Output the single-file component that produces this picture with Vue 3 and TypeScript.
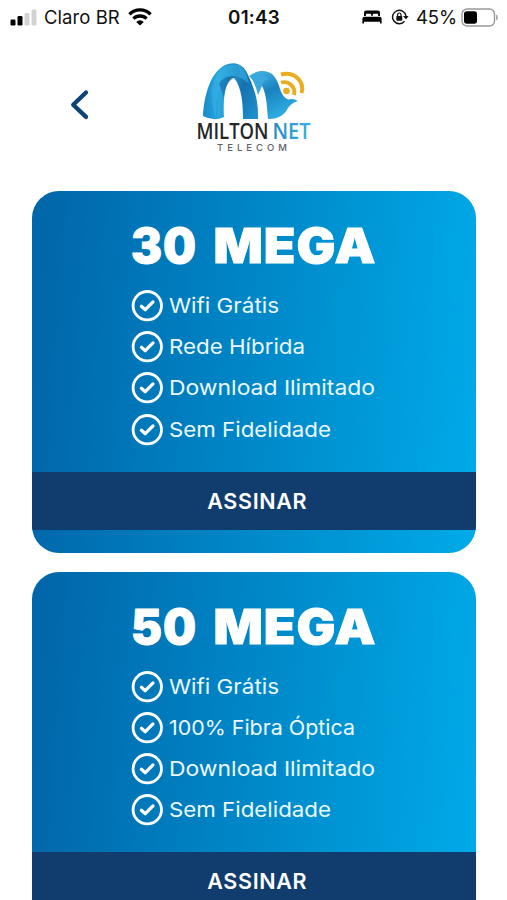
<script setup lang="ts">
interface Feature {
  label: string
  width: number
}
interface Plan {
  speed: string
  features: Feature[]
}

const wifi: Feature = { label: 'Wifi Grátis', width: 110 }
const download: Feature = { label: 'Download Ilimitado', width: 206 }
const loyalty: Feature = { label: 'Sem Fidelidade', width: 162 }

const plans: Plan[] = [
  { speed: '30', features: [wifi, { label: 'Rede Híbrida', width: 136 }, download, loyalty] },
  { speed: '50', features: [wifi, { label: '100% Fibra Óptica', width: 186 }, download, loyalty] },
]
</script>

<template>
  <main class="screen">
    <div class="status">
      <div class="side">
        <svg class="signal" width="27" height="17" viewBox="0 0 27 17">
          <rect x="0.5" y="10.5" width="5" height="6" rx="1.2" />
          <rect x="7.5" y="7" width="5" height="9.5" rx="1.2" />
          <rect x="14.5" y="4" width="5" height="12.5" rx="1.2" class="faint" />
          <rect x="21.5" y="0.5" width="5" height="16" rx="1.2" class="faint" />
        </svg>
        <span class="carrier">Claro BR</span>
        <svg width="24" height="18" viewBox="0 0 24 18" fill="none" stroke="#000" stroke-width="3.3">
          <path d="M1.4 6.4C7.2 .4 16.8 .4 22.6 6.4" />
          <path d="M5.4 10.7C9 7.1 15 7.1 18.6 10.7" />
          <path d="M12 17.6L8.2 13.9Q12 10.6 15.8 13.9Z" fill="#000" stroke="none" />
        </svg>
      </div>
      <span class="clock">01:43</span>
      <div class="side right">
        <svg class="bed" width="20" height="14" viewBox="0 0 20 14">
          <path d="M2 6V2.5Q2 .5 4 .5H16Q18 .5 18 2.5V6H16.2V5Q16.2 3.8 15 3.8H12Q10.7 3.8 10.7 5V6H9.3V5Q9.3 3.8 8 3.8H5Q3.8 3.8 3.8 5V6Z" />
          <path d="M.4 13.5V8.7Q.4 6.7 2.4 6.7H17.6Q19.6 6.7 19.6 8.7V13.5H18V11.8H2V13.5Z" />
        </svg>
        <svg class="lock" width="18" height="16" viewBox="0 0 18 16" fill="none" stroke="#111" stroke-width="1.4">
          <path d="M14.9 7A6.7 6.7 0 1 0 13.5 12.2" />
          <path d="M12.2 7H17.6L14.9 10.4Z" fill="#111" stroke="none" />
          <rect x="5.3" y="7" width="6" height="4.7" rx=".7" fill="#111" stroke="none" />
          <path d="M6.6 7.2V5.7Q6.6 4 8.3 4T10 5.7V7.2" stroke-width="1.2" />
        </svg>
        <span class="percent">45%</span>
        <svg class="battery" width="37" height="19" viewBox="0 0 37 19">
          <rect x="1" y="1" width="32.5" height="17" rx="5" fill="none" stroke="#999" stroke-width="1.4" />
          <rect x="3" y="3.2" width="13" height="12.6" rx="2.8" />
          <path d="M35.2 6.5Q36.8 7.2 36.8 9.5T35.2 12.5Z" fill="#999" />
        </svg>
      </div>
    </div>

    <header class="header">
      <svg class="back" width="22" height="32" viewBox="0 0 22 32">
        <path d="M18 3.5L5.2 15.7L18 27.9" fill="none" stroke="#0c4379" stroke-width="4.3" stroke-linecap="round" stroke-linejoin="round" />
      </svg>
      <svg class="logo" width="120" height="96" viewBox="0 0 120 96">
        <defs>
          <linearGradient id="leg" x1="0" y1="0" x2="1" y2="0">
            <stop offset="0" stop-color="#1789c9" />
            <stop offset=".45" stop-color="#2aa9e0" />
            <stop offset="1" stop-color="#1677b3" />
          </linearGradient>
          <linearGradient id="bend" x1="0" y1="0" x2="1" y2="1">
            <stop offset="0" stop-color="#3fb3e5" />
            <stop offset=".5" stop-color="#1471ae" />
            <stop offset="1" stop-color="#1f95d0" />
          </linearGradient>
          <linearGradient id="wing" x1="0" y1="0" x2=".5" y2="1">
            <stop offset="0" stop-color="#48b8e8" />
            <stop offset=".5" stop-color="#1a82bf" />
            <stop offset="1" stop-color="#2eaee2" />
          </linearGradient>
          <linearGradient id="net" x1="0" y1="0" x2="1" y2="0">
            <stop offset="0" stop-color="#2787c5" />
            <stop offset="1" stop-color="#38b3e6" />
          </linearGradient>
        </defs>
        <path d="M53 17C60 12 66 11 72 13C79 15 82 23 84 30C86 36 89 40 93 40.5Q97 39 102 42C98 43 94 46 92 49C89 55 84 60 72 60C71 50 71 36 66 27Q58 23 53 17Z" fill="url(#wing)" />
        <path d="M26 8C34 2 45 3 50 12C56 23 63 40 62 60H47C47 46 46 28 38 19Q31 14 26 8Z" fill="url(#bend)" />
        <path d="M54 17Q64 12 73 20Q67 21 66 27L62 36Q60 26 54 17Z" fill="#3aa8dc" />
        <path d="M7 57C8 34 17 4 37 5C43 5 46 11 42 18C29 17 27 36 28 58Q18 63 7 57Z" fill="url(#leg)" />
        <path d="M20 17C27 5 42 1 48 11C51 15 52 20 53 25C45 17 34 14 27 22C22 29 20 40 20 59C14 43 14 28 20 17Z" fill="#3ab3e6" opacity=".55" />
        <path d="M23 25Q28 15 41 18Q30 20 28 39Q26 31 23 25Z" fill="#10649f" opacity=".55" />
        <g fill="none" stroke="#e9ad20" stroke-width="4">
          <path d="M85 15.5C98 12 109 22 105.5 34" />
          <path d="M85 23.5C93 21.5 100 28 98 36" stroke-width="3.8" />
        </g>
        <circle cx="90.5" cy="32" r="3.3" fill="#e9ad20" />
        <text x="0.5" y="79.5" class="brand" textLength="72" lengthAdjust="spacingAndGlyphs">MILTON</text>
        <text x="76.5" y="79.5" class="brand net" textLength="38" lengthAdjust="spacingAndGlyphs">NET</text>
        <text x="21" y="91.5" class="tele" textLength="70">TELECOM</text>
      </svg>
    </header>

    <section class="plans">
      <article v-for="plan in plans" :key="plan.speed" class="card">
        <div class="content">
          <svg class="title" width="250" height="58" viewBox="0 0 250 58">
            <text x="0" y="46" textLength="66" lengthAdjust="spacingAndGlyphs">{{ plan.speed }}</text>
            <text x="82.5" y="46" textLength="163" lengthAdjust="spacingAndGlyphs">MEGA</text>
          </svg>
          <ul>
            <li v-for="feature in plan.features" :key="feature.label">
              <svg class="check" width="32" height="32" viewBox="0 0 32 32" fill="none" stroke="#fff" stroke-width="2.8">
                <circle cx="16.3" cy="15.7" r="14.2" />
                <path d="M10.4 16.2L14.3 19.7L22 11.9" stroke-width="3.2" stroke-linecap="round" stroke-linejoin="round" />
              </svg>
              <svg class="label" width="212" height="32" viewBox="0 0 212 32">
                <text x="0" y="22.7" :textLength="feature.width" lengthAdjust="spacingAndGlyphs">{{ feature.label }}</text>
              </svg>
            </li>
          </ul>
        </div>
        <button type="button">ASSINAR</button>
      </article>
    </section>
  </main>
</template>

<style>
body {
  margin: 0;
  background: #fff;
}
</style>

<style scoped>
.screen {
  box-sizing: border-box;
  height: 900px;
  overflow: hidden;
  font-family: Inter, "Liberation Sans", sans-serif;
  background: #fff;
}
svg {
  display: block;
  flex: none;
}
.status {
  display: grid;
  grid-template-columns: 1fr auto 1fr;
  align-items: center;
  height: 34px;
  padding: 0 9px 0 10px;
  color: #111;
}
.side {
  display: flex;
  align-items: center;
}
.right {
  justify-content: flex-end;
}
.faint {
  fill: #d3d3d3;
}
.carrier {
  margin: 0 8px 0 7px;
  font-size: 18.5px;
  letter-spacing: 0.05px;
}
.clock {
  margin-right: 0;
  font-size: 18.8px;
  font-weight: 600;
  letter-spacing: 0.2px;
}
.lock {
  margin: 0 7px 0 9px;
}
.percent {
  margin-right: 4px;
  font-size: 18.5px;
  letter-spacing: -0.1px;
}
.header {
  display: flex;
  align-items: flex-start;
  height: 157px;
}
.back {
  margin: 55px 0 0 68px;
}
.logo {
  margin: 25px 0 0 106px;
}
.brand {
  font-family: "Open Sans", sans-serif;
  font-size: 22px;
  font-weight: 600;
  fill: #252629;
}
.brand.net {
  fill: url(#net);
}
.tele {
  font-family: Inter, sans-serif;
  font-size: 9.5px;
  font-weight: 500;
  fill: #606266;
}
.plans {
  display: flex;
  flex-direction: column;
  gap: 19px;
  padding: 0 31.5px 0 32px;
}
.card {
  box-sizing: border-box;
  flex: none;
  height: 361.7px;
  overflow: hidden;
  border-radius: 27px;
  background: linear-gradient(94deg, #0067aa 3%, #00a9e7 98%);
}
.content {
  box-sizing: border-box;
  height: 280.5px;
  padding: 26px 0 0 99px;
}
.title text {
  font-size: 48px;
  font-weight: 900;
  letter-spacing: 1px;
  fill: #fff;
  stroke: #fff;
  stroke-width: 0.9px;
}
ul {
  display: flex;
  flex-direction: column;
  gap: 9.2px;
  margin: 15px 0 0;
  padding: 0;
  list-style: none;
}
li {
  display: flex;
  gap: 6px;
}
.label text {
  font-size: 20.5px;
  fill: #edf8ff;
}
button {
  display: block;
  width: 100%;
  height: 58.5px;
  padding: 0 0 0 7px;
  border: 0;
  color: #fff;
  font: 600 21.5px Inter, "Liberation Sans", sans-serif;
  letter-spacing: 0.65px;
  background: #113d6e;
}
</style>
